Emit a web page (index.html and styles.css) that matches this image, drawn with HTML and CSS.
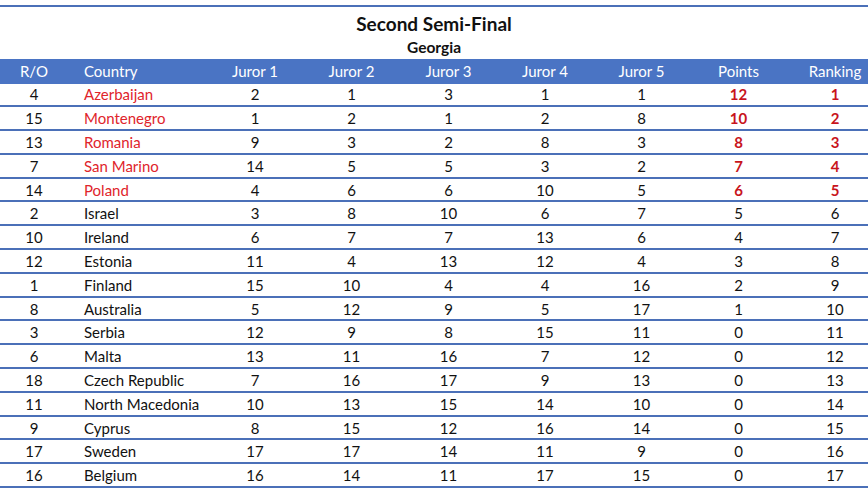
FILE: index.html
```html
<!DOCTYPE html>
<html>
<head>
<meta charset="utf-8">
<link rel="stylesheet" href="styles.css">
</head>
<body>
<div class="sheet">
  <div class="title">Second Semi-Final</div>
  <div class="subtitle">Georgia</div>
  <div class="row head">
    <div class="c">R/O</div><div class="l">Country</div><div class="c">Juror 1</div><div class="c">Juror 2</div><div class="c">Juror 3</div><div class="c">Juror 4</div><div class="c">Juror 5</div><div class="c">Points</div><div class="c last">Ranking</div>
  </div>
  <div class="row top"><div class="c">4</div><div class="l">Azerbaijan</div><div class="c">2</div><div class="c">1</div><div class="c">3</div><div class="c">1</div><div class="c">1</div><div class="c pts">12</div><div class="c last pts">1</div></div>
  <div class="row top"><div class="c">15</div><div class="l">Montenegro</div><div class="c">1</div><div class="c">2</div><div class="c">1</div><div class="c">2</div><div class="c">8</div><div class="c pts">10</div><div class="c last pts">2</div></div>
  <div class="row top"><div class="c">13</div><div class="l">Romania</div><div class="c">9</div><div class="c">3</div><div class="c">2</div><div class="c">8</div><div class="c">3</div><div class="c pts">8</div><div class="c last pts">3</div></div>
  <div class="row top"><div class="c">7</div><div class="l">San Marino</div><div class="c">14</div><div class="c">5</div><div class="c">5</div><div class="c">3</div><div class="c">2</div><div class="c pts">7</div><div class="c last pts">4</div></div>
  <div class="row top"><div class="c">14</div><div class="l">Poland</div><div class="c">4</div><div class="c">6</div><div class="c">6</div><div class="c">10</div><div class="c">5</div><div class="c pts">6</div><div class="c last pts">5</div></div>
  <div class="row"><div class="c">2</div><div class="l">Israel</div><div class="c">3</div><div class="c">8</div><div class="c">10</div><div class="c">6</div><div class="c">7</div><div class="c">5</div><div class="c last">6</div></div>
  <div class="row"><div class="c">10</div><div class="l">Ireland</div><div class="c">6</div><div class="c">7</div><div class="c">7</div><div class="c">13</div><div class="c">6</div><div class="c">4</div><div class="c last">7</div></div>
  <div class="row"><div class="c">12</div><div class="l">Estonia</div><div class="c">11</div><div class="c">4</div><div class="c">13</div><div class="c">12</div><div class="c">4</div><div class="c">3</div><div class="c last">8</div></div>
  <div class="row"><div class="c">1</div><div class="l">Finland</div><div class="c">15</div><div class="c">10</div><div class="c">4</div><div class="c">4</div><div class="c">16</div><div class="c">2</div><div class="c last">9</div></div>
  <div class="row"><div class="c">8</div><div class="l">Australia</div><div class="c">5</div><div class="c">12</div><div class="c">9</div><div class="c">5</div><div class="c">17</div><div class="c">1</div><div class="c last">10</div></div>
  <div class="row"><div class="c">3</div><div class="l">Serbia</div><div class="c">12</div><div class="c">9</div><div class="c">8</div><div class="c">15</div><div class="c">11</div><div class="c">0</div><div class="c last">11</div></div>
  <div class="row"><div class="c">6</div><div class="l">Malta</div><div class="c">13</div><div class="c">11</div><div class="c">16</div><div class="c">7</div><div class="c">12</div><div class="c">0</div><div class="c last">12</div></div>
  <div class="row"><div class="c">18</div><div class="l">Czech Republic</div><div class="c">7</div><div class="c">16</div><div class="c">17</div><div class="c">9</div><div class="c">13</div><div class="c">0</div><div class="c last">13</div></div>
  <div class="row"><div class="c">11</div><div class="l">North Macedonia</div><div class="c">10</div><div class="c">13</div><div class="c">15</div><div class="c">14</div><div class="c">10</div><div class="c">0</div><div class="c last">14</div></div>
  <div class="row"><div class="c">9</div><div class="l">Cyprus</div><div class="c">8</div><div class="c">15</div><div class="c">12</div><div class="c">16</div><div class="c">14</div><div class="c">0</div><div class="c last">15</div></div>
  <div class="row"><div class="c">17</div><div class="l">Sweden</div><div class="c">17</div><div class="c">17</div><div class="c">14</div><div class="c">11</div><div class="c">9</div><div class="c">0</div><div class="c last">16</div></div>
  <div class="row"><div class="c">16</div><div class="l">Belgium</div><div class="c">16</div><div class="c">14</div><div class="c">11</div><div class="c">17</div><div class="c">15</div><div class="c">0</div><div class="c last">17</div></div>
</div>
</body>
</html>
```
FILE: styles.css
```css
html, body {
  margin: 0;
  padding: 0;
  background: #ffffff;
}
body {
  font-family: Lato, "Open Sans", sans-serif;
  color: #111111;
}
.sheet {
  margin-top: 5px;
  border-top: 2px solid #4b70b8;
  width: 868px;
}
.title {
  text-align: center;
  font-weight: 700;
  font-size: 19px;
  line-height: 24px;
  padding-top: 5px;
}
.subtitle {
  text-align: center;
  font-weight: 700;
  font-size: 15.5px;
  line-height: 19px;
  padding-top: 2px;
  height: 23px;
  box-sizing: border-box;
}
.row {
  display: grid;
  grid-template-columns: 68px 139px 96px 97px 97px 96px 97px 97px 81px;
  height: 23.8px;
  box-sizing: border-box;
  border-bottom: 2px solid #4b70b8;
  align-items: center;
  font-size: 15px;
}
.row.head {
  height: 24.5px;
  border-bottom: 0;
  background: #4a74c4;
  color: #ffffff;
}
.c {
  text-align: center;
}
.l {
  text-align: left;
  padding-left: 16px;
}
.last {
  padding-left: 15px;
}
.top .l {
  color: #e0242b;
}
.pts {
  color: #c8141c;
  font-weight: 700;
}
```
